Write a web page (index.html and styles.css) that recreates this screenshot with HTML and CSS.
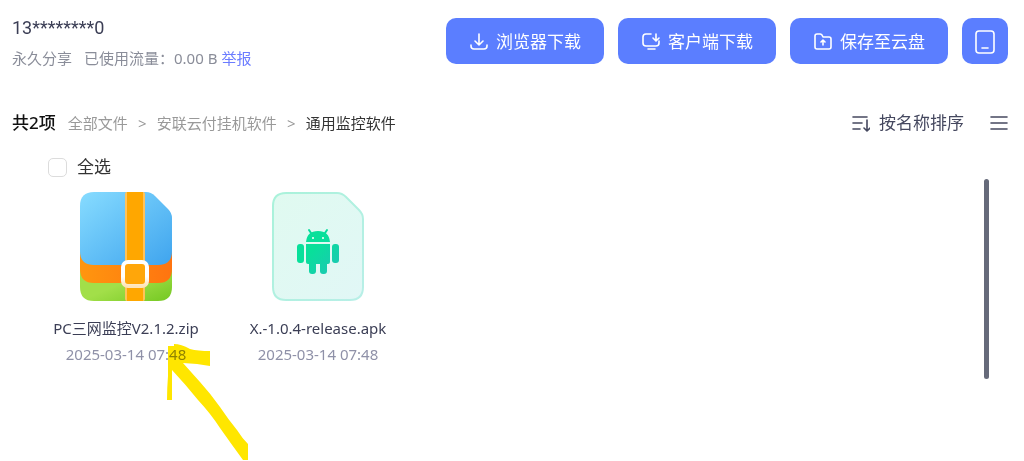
FILE: index.html
```html
<!DOCTYPE html>
<html lang="zh-CN">
<head>
    <meta charset="utf-8">
    <meta name="viewport" content="width=device-width, initial-scale=1">
    <title>通用监控软件</title>
    <link rel="stylesheet" href="styles.css">
</head>
<body>
    <header class="share-header">
        <div class="share-info">
            <h1 class="owner">13********0</h1>
            <p class="meta"><span class="expire">永久分享</span><span>已使用流量：0.00 B</span><a class="report" href="#">举报</a></p>
        </div>
        <div class="actions">
            <button class="btn" type="button">
                <svg width="20" height="20" viewBox="0 0 20 20"><path d="M10 2v11M6 9l4 4 4-4M2 13v1q0 3 3 3h10q3 0 3-3v-1"/></svg>
                浏览器下载
            </button>
            <button class="btn" type="button">
                <svg width="20" height="20" viewBox="0 0 20 20"><path d="M10 2H5Q2 2 2 5v6q0 3 3 3h10q3 0 3-3V9M7 17h7M15 2v6M12 6l3 3 3-3"/></svg>
                客户端下载
            </button>
            <button class="btn" type="button">
                <svg width="20" height="20" viewBox="0 0 20 20"><path d="M2 15V4q0-2 2-2h3q1 0 2 1l1 2h6q2 0 2 2v8q0 2-2 2H4q-2 0-2-2zM10 13V8M8 10l2-2 2 2"/></svg>
                保存至云盘
            </button>
            <button class="btn btn-icon" type="button" aria-label="手机">
                <svg width="20" height="24" viewBox="0 0 20 24"><rect x="1" y="1" width="18" height="22" rx="3"/><path d="M7 18h6"/></svg>
            </button>
        </div>
    </header>

    <div class="toolbar">
        <strong class="count">共2项</strong>
        <nav class="crumbs">
            <a href="#">全部文件</a>
            <span class="sep">&gt;</span>
            <a href="#">安联云付挂机软件</a>
            <span class="sep">&gt;</span>
            <span class="current">通用监控软件</span>
        </nav>
        <button class="tool sort" type="button">
            <svg width="18" height="18" viewBox="0 0 18 18"><path d="M1 3h14M1 9h9M1 15h7M15 6v10M12 14l3 3 3-3"/></svg>
            按名称排序
        </button>
        <button class="tool" type="button" aria-label="列表">
            <svg width="18" height="18" viewBox="0 0 18 18"><path d="M1 3h16M1 9h16M1 15h16"/></svg>
        </button>
    </div>

    <main class="content">
        <div class="files">
            <label class="select-all"><input type="checkbox">全选</label>
            <ul class="grid">
                <li class="file">
                    <svg class="thumb" width="92" height="110" viewBox="0 0 92 110">
                        <defs>
                            <linearGradient id="blue" x1="0" y1="0" x2="1" y2="1"><stop offset="0" stop-color="#87dcff"/><stop offset="1" stop-color="#3fa4ee"/></linearGradient>
                            <linearGradient id="orange" x1="0" y1="0" x2="1" y2="0"><stop offset="0" stop-color="#ff960f"/><stop offset="1" stop-color="#ff7410"/></linearGradient>
                            <linearGradient id="green" x1="0" y1="0" x2="1" y2="1"><stop offset="50%" stop-color="#a2df49"/><stop offset="1" stop-color="#74c822"/></linearGradient>
                            <linearGradient id="buckle" x1="0" y1="0" x2="0" y2="1"><stop offset="60%" stop-color="#fff"/><stop offset="1" stop-color="#ffe4b8"/></linearGradient>
                        </defs>
                        <path fill="url(#green)" d="M0 70h92v25q0 14-14 14H14q-14 0-14-14z"/>
                        <path fill="url(#orange)" d="M0 55h92v22q0 14-14 14H14q-14 0-14-14z"/>
                        <path fill="url(#blue)" d="M14 0h52q5 0 9 4l13 13q4 4 4 9v33q0 14-14 14H14Q0 73 0 59V14Q0 0 14 0z"/>
                        <rect x="45" y="0" width="20" height="109" rx="2" fill="#ffc35a"/>
                        <rect x="47" y="0" width="16" height="109" fill="#ffa700"/>
                        <rect x="43" y="70" width="24" height="24" rx="5" fill="#ffa60a" stroke="url(#buckle)" stroke-width="4"/>
                    </svg>
                    <span class="name">PC三网监控V2.1.2.zip</span>
                    <time class="date">2025-03-14 07:48</time>
                </li>
                <li class="file">
                    <svg class="thumb" width="92" height="110" viewBox="0 0 92 110">
                        <defs>
                            <linearGradient id="mint" x1="0" y1="0" x2="1" y2="1"><stop offset="0" stop-color="#e0faf0"/><stop offset="1" stop-color="#e1f7f6"/></linearGradient>
                            <linearGradient id="edge" x1="0" y1="0" x2="1" y2="1"><stop offset="0" stop-color="#a9f2da"/><stop offset="1" stop-color="#b8efe7"/></linearGradient>
                            <linearGradient id="robot" gradientUnits="userSpaceOnUse" x1="28" y1="42" x2="64" y2="76"><stop offset="40%" stop-color="#08e09a"/><stop offset="1" stop-color="#1bc9b2"/></linearGradient>
                        </defs>
                        <path fill="url(#mint)" stroke="url(#edge)" stroke-width="2" d="M14 1h51q5 0 9 4l13 13q4 4 4 9v68q0 13-13 13H14Q1 108 1 95V14Q1 1 14 1z"/>
                        <g fill="url(#robot)">
                            <path d="M34 50q1-11 12-11t12 11z"/>
                            <path d="M34 52h24v18q0 2-2 2H36q-2 0-2-2z"/>
                            <rect x="25" y="52" width="7" height="19" rx="3"/>
                            <rect x="60" y="52" width="7" height="19" rx="3"/>
                            <rect x="37" y="66" width="7" height="16" rx="3"/>
                            <rect x="48" y="66" width="7" height="16" rx="3"/>
                        </g>
                        <path d="M39 41l-2-3M53 41l2-3" stroke="#08dc9c" stroke-width="2" stroke-linecap="round"/>
                        <circle cx="41" cy="46" r="1" fill="#fff"/>
                        <circle cx="51" cy="46" r="1" fill="#fff"/>
                    </svg>
                    <span class="name">X.-1.0.4-release.apk</span>
                    <time class="date">2025-03-14 07:48</time>
                </li>
            </ul>
        </div>
        <div class="scrollbar"></div>
    </main>

    <!-- marker arrow drawn over the first file -->
    <svg class="marker" width="82" height="116" viewBox="0 0 82 116">
        <path d="M2 2l6 0V0q7 0 16 5 8 2 20 2v15l-13-2-14-1q8 9 17 19 10 11 20 25 8 12 17 23 5 8 11 14v16h-5Q66 101 54 84 45 70 32 56 20 41 6 26v30H1q0-12 1-24z"/>
    </svg>
</body>
</html>
```

FILE: styles.css
```css
* { margin: 0; padding: 0; box-sizing: border-box; }

body {
    position: relative;
    min-height: 100vh;
    font-family: "Noto Sans", "Noto Sans CJK SC", sans-serif;
    font-size: 15px;
    line-height: 24px;
    color: #3b3e55;
    background: #fff;
}

a { color: inherit; text-decoration: none; }
button { font: inherit; border: 0; cursor: pointer; }
svg { flex: none; }

.share-header {
    display: flex;
    justify-content: space-between;
    padding: 16px 16px 0 12px;
}

.owner { font-family: Roboto, sans-serif; font-size: 18px; font-weight: 400; }
.meta { display: flex; margin-top: 6px; color: #8a8d99; }
.expire { margin-right: 12px; }
.report { margin-left: 4px; color: #6b7cff; }

.actions { display: flex; gap: 14px; padding-top: 2px; }

.btn {
    display: flex;
    align-items: center;
    justify-content: center;
    gap: 7px;
    width: 158px;
    height: 46px;
    padding-top: 2px;
    border-radius: 10px;
    background: #5b7eff;
    color: #fff;
    font-size: 17px;
}
.btn-icon { width: 46px; }

.btn svg, .tool svg {
    fill: none;
    stroke: currentColor;
    stroke-width: 1.6;
    stroke-linecap: round;
    stroke-linejoin: round;
}

.toolbar {
    display: flex;
    align-items: center;
    margin-top: 41px;
    padding: 0 16px 0 12px;
}

.count { font-size: 17px; font-weight: 500; color: #111; }

.crumbs {
    display: flex;
    flex: 1;
    margin-left: 12px;
    color: #999;
}
.crumbs .sep { width: 29px; text-align: center; }
.crumbs .current { color: #333; }

.tool {
    display: flex;
    align-items: center;
    gap: 9px;
    background: none;
    color: #45485f;
    font-size: 17px;
}
.sort { margin-right: 26px; }

.content {
    display: flex;
    justify-content: space-between;
    margin-top: 20px;
    padding: 0 35px 0 30px;
}

.select-all {
    display: flex;
    align-items: center;
    width: fit-content;
    gap: 10px;
    margin-left: 18px;
    font-size: 17px;
    color: #333;
}
.select-all input {
    appearance: none;
    width: 19px;
    height: 19px;
    border: 1px solid #dcdcdc;
    border-radius: 5px;
}

.grid {
    display: flex;
    flex-wrap: wrap;
    margin-top: 13px;
    list-style: none;
}

.file {
    display: flex;
    flex-direction: column;
    align-items: center;
    width: 192px;
}
.name { margin-top: 14px; color: #3b3e55; }
.date { margin-top: 2px; color: #8f91a8; }

.scrollbar {
    width: 5px;
    height: 200px;
    margin-top: 24px;
    border-radius: 3px;
    background: #666a7a;
}

.marker {
    position: absolute;
    left: 166px;
    top: 344px;
    fill: #ffe600;
    mix-blend-mode: multiply;
}
```
